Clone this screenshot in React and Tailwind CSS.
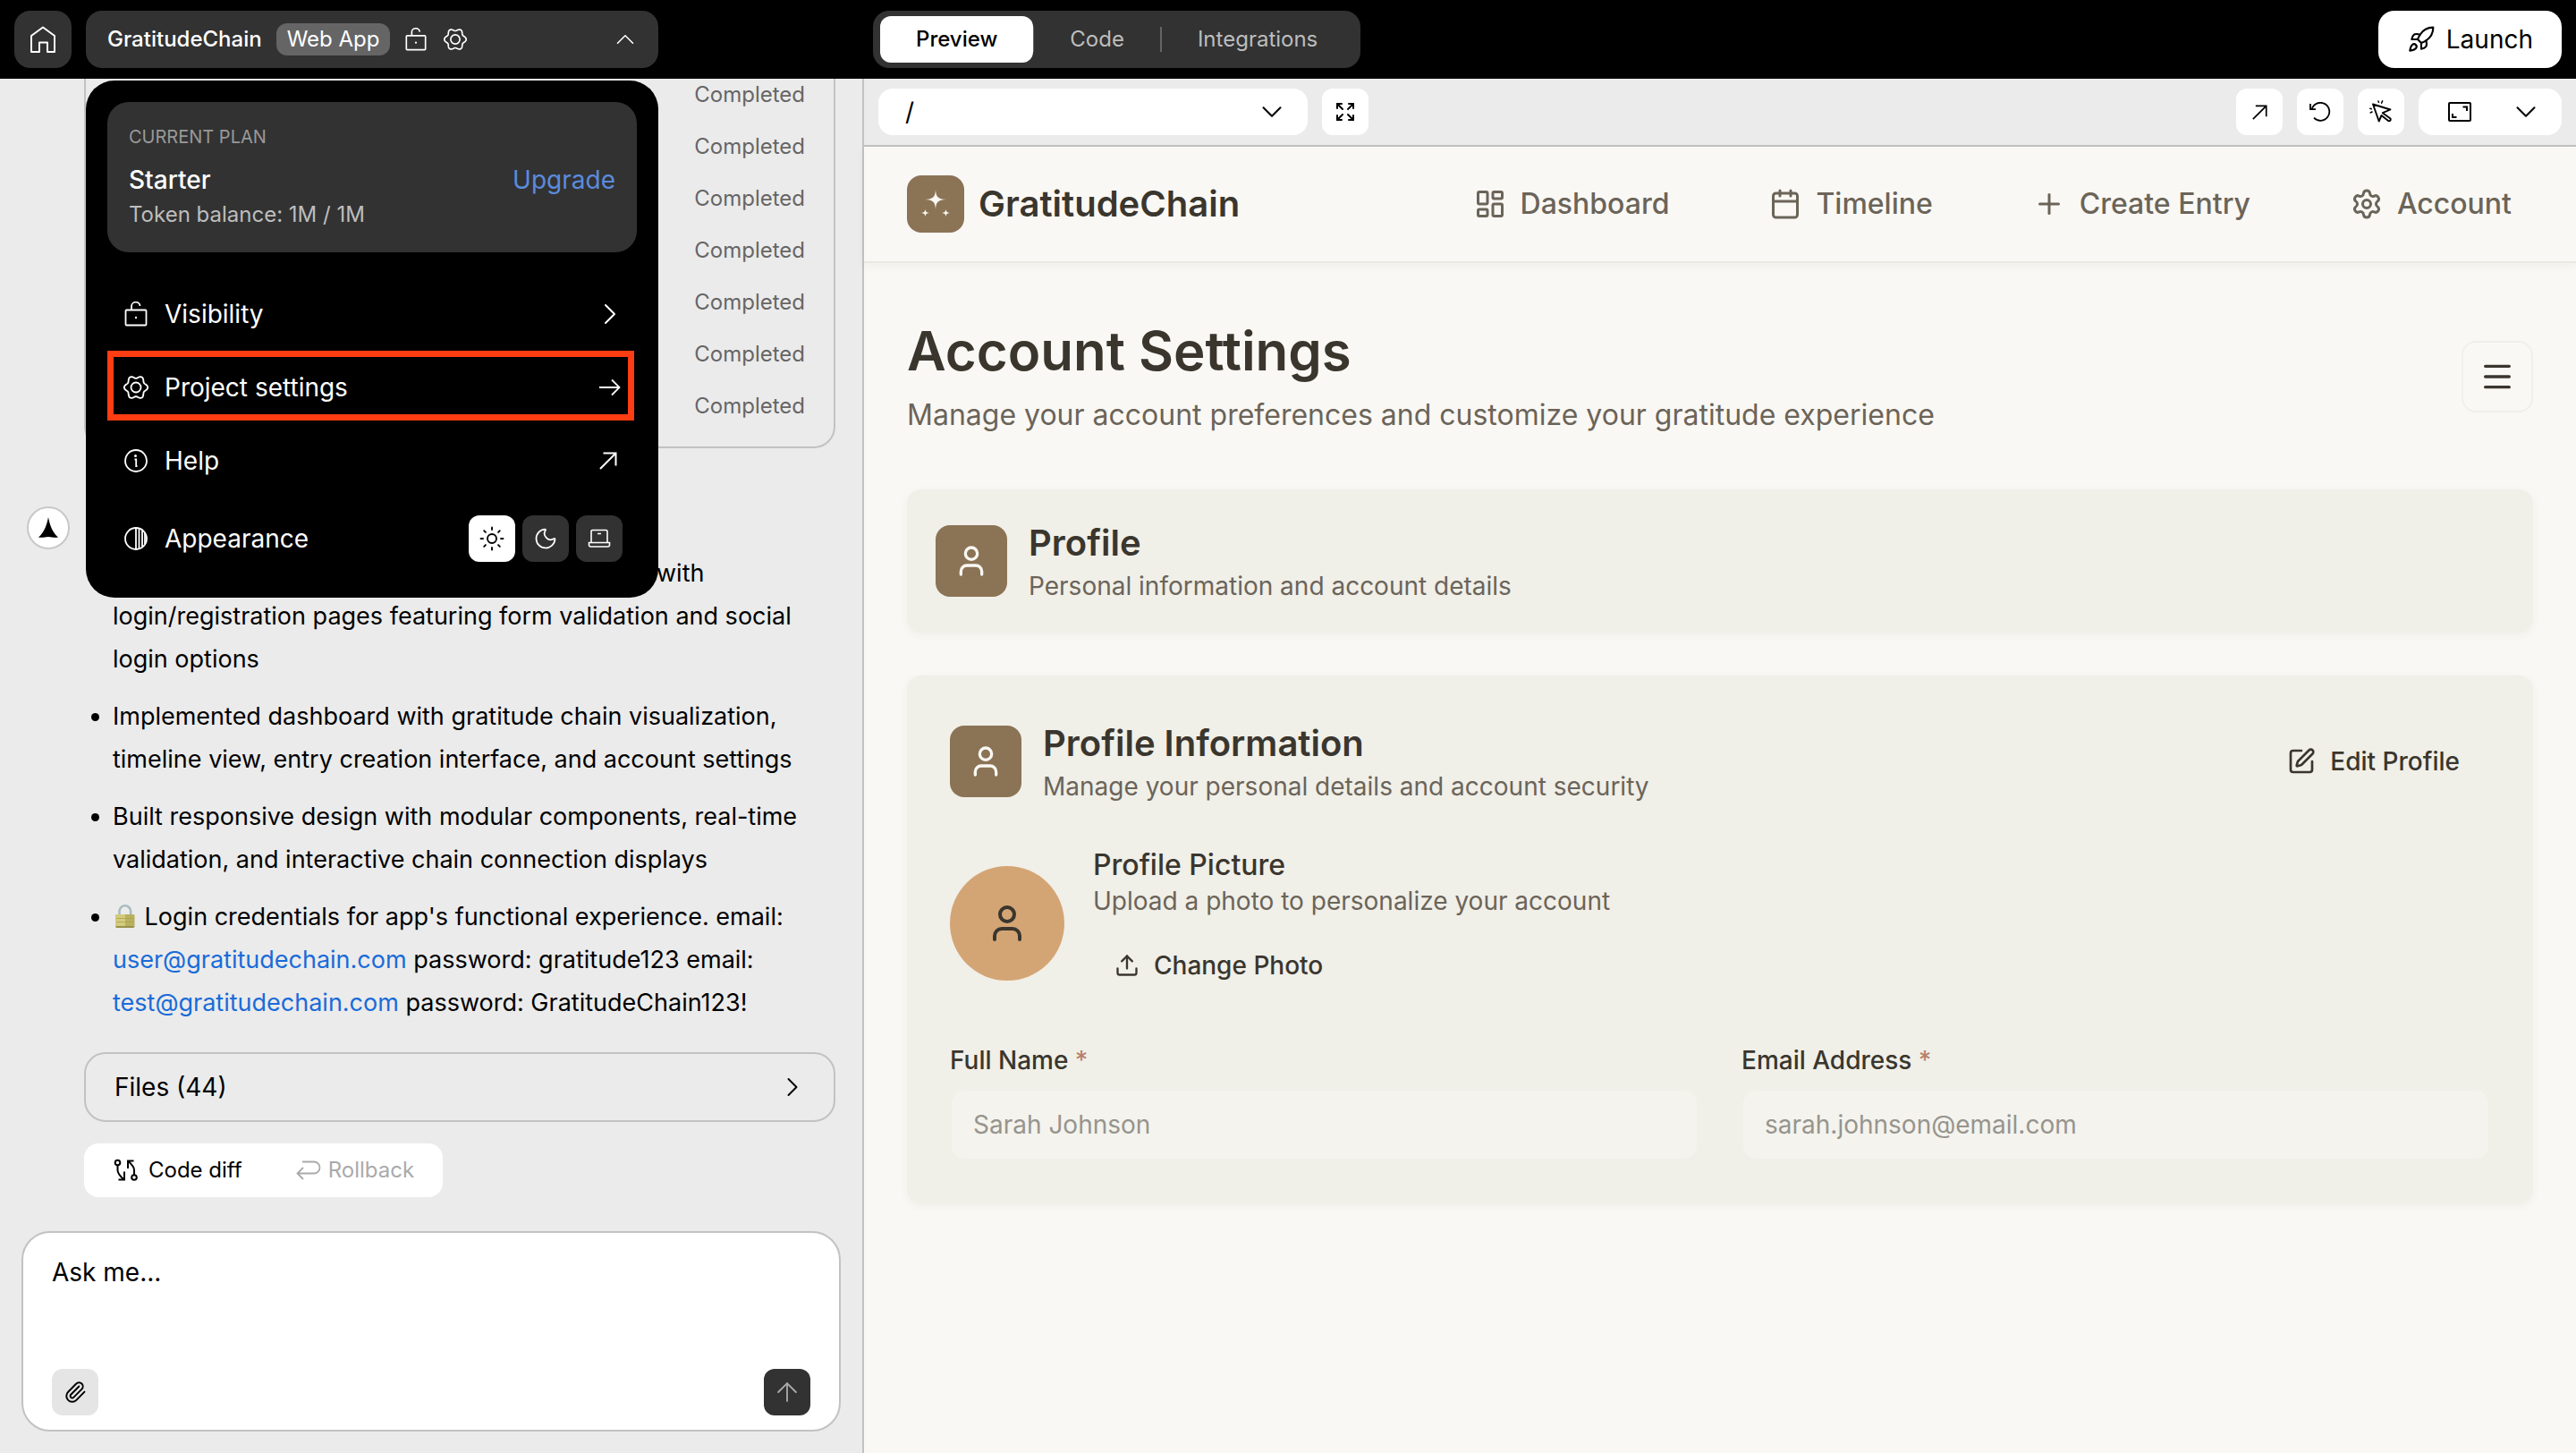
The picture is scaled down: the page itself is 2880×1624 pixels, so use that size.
import { useState } from "react";
import {
  ArrowUp,
  Calendar,
  ChevronDown,
  ChevronRight,
  ChevronUp,
  Expand,
  LayoutDashboard,
  Menu,
  Moon,
  Paperclip,
  Plus,
  Rocket,
  Settings,
  SquarePen,
  Sun,
  Upload,
  User,
} from "lucide-react";

/* ========================
   Icons
======================== */

function HomeIcon() {
  return (
    <svg width="30" height="30" viewBox="0 0 30 30" fill="none" stroke="currentColor" strokeWidth="2">
      <path d="M2 11 15 1.5 28 11v18h-8V18.5h-9V29H2z" strokeLinejoin="round" />
    </svg>
  );
}

function UnlockIcon({ size = 28 }) {
  return (
    <svg width={size} height={size} viewBox="0 0 28 28" fill="none" stroke="currentColor" strokeWidth="1.8">
      <rect x="2.5" y="9.5" width="23" height="17" rx="1" />
      <path d="M9 9.5V6a4.8 4.8 0 0 1 9.6-1" />
      <circle cx="14" cy="18" r="1.2" fill="currentColor" stroke="none" />
    </svg>
  );
}

// rounded six-lobe outline
const gearPoints = Array.from({ length: 120 }, (_, i) => {
  const a = (i * Math.PI) / 60;
  const r = 11.7 + 1.5 * Math.cos(6 * a);
  return `${(14 + r * Math.cos(a)).toFixed(2)},${(14 + r * Math.sin(a)).toFixed(2)}`;
}).join(" ");

function GearIcon({ size = 28 }) {
  return (
    <svg width={size} height={size} viewBox="0 0 28 28" fill="none" stroke="currentColor" strokeWidth="1.8">
      <polygon points={gearPoints} />
      <circle cx="14" cy="14" r="5.5" />
    </svg>
  );
}

function InfoIcon() {
  return (
    <svg width="28" height="28" viewBox="0 0 28 28" fill="none" stroke="currentColor" strokeWidth="1.8">
      <circle cx="14" cy="14" r="12" />
      <path d="M12.5 12.5h1.7V20h1.3" />
      <circle cx="13.5" cy="8.5" r="1.5" fill="currentColor" stroke="none" />
    </svg>
  );
}

function ContrastIcon() {
  return (
    <svg width="28" height="28" viewBox="0 0 28 28" fill="none" stroke="currentColor" strokeWidth="1.8">
      <circle cx="14" cy="14" r="12" />
      <path d="M14 2v24M17.5 3v22M21 4.5v19M24 8v12" />
    </svg>
  );
}

function LaptopIcon() {
  return (
    <svg width="26" height="22" viewBox="0 0 26 22" fill="none" stroke="currentColor" strokeWidth="1.6">
      <path d="M4 15V3a1.5 1.5 0 0 1 1.5-1.5h15A1.5 1.5 0 0 1 22 3v12" />
      <path d="M1.5 15.5h23V18a2 2 0 0 1-2 2h-19a2 2 0 0 1-2-2zM11 5.5h4" />
    </svg>
  );
}

function ArrowRightThin() {
  return (
    <svg width="24" height="20" viewBox="0 0 24 20" fill="none" stroke="currentColor" strokeWidth="1.8">
      <path d="M0 10h22.5M14 1.5l8.5 8.5-8.5 8.5" />
    </svg>
  );
}

function ArrowOutIcon({ size = 20 }) {
  return (
    <svg width={size} height={size} viewBox="0 0 20 20" fill="none" stroke="currentColor" strokeWidth="2">
      <path d="M1 19 18.5 1.5M4.5 1.5h14v14" />
    </svg>
  );
}

function ReloadIcon() {
  return (
    <svg width="24" height="22" viewBox="0 0 24 22" fill="none" stroke="currentColor" strokeWidth="1.8">
      <path d="M5 17.7A10 10 0 1 0 2.7 8" />
      <path d="M1 2v6.2h6" />
    </svg>
  );
}

function PointerClickIcon() {
  return (
    <svg
      width="26"
      height="26"
      viewBox="0 0 26 26"
      fill="none"
      stroke="currentColor"
      strokeWidth="1.9"
      strokeLinecap="round"
      strokeLinejoin="round"
    >
      <path d="M4 4.5 23.5 10.5 14.8 14.2 23.2 20.2a1.6 1.6 0 0 1-2.4 2.6L13.5 17 10.7 23.5z" />
      <path d="M10 .9l.4 1.4M14.6.9l-1 2.3M.9 9.3l1.4.4M1.2 14l1.9-1" strokeWidth="1.5" />
    </svg>
  );
}

function ScreenIcon() {
  return (
    <svg width="26" height="22" viewBox="0 0 26 22" fill="none" stroke="currentColor" strokeWidth="2">
      <rect x="1" y="1" width="24" height="20" rx="1" />
      <path d="M16.5 5.5H21V10M5 13v4h4.5" />
    </svg>
  );
}

function DiffIcon() {
  return (
    <svg width="28" height="26" viewBox="0 0 28 26" fill="none" stroke="currentColor" strokeWidth="2">
      <circle cx="5.500" cy="4.5" r="2.8" />
      <circle cx="24" cy="21" r="2.8" />
      <path d="M5.5 7.5V13c0 3 2 6 7.2 10.5M13 14.5v9H6.5M24 18v-5.5c0-3-2-5.5-7-10M17 11V2.5h6.5" />
    </svg>
  );
}

function RollbackIcon() {
  return (
    <svg width="28" height="22" viewBox="0 0 28 22" fill="none" stroke="currentColor" strokeWidth="1.8">
      <path d="M7 1.5h13a6.5 6.5 0 0 1 0 13H1.5M8 8l-6.5 6.5L8 21" />
    </svg>
  );
}

function AgentMark() {
  return (
    <svg width="22" height="24" viewBox="0 0 22 24" fill="currentColor">
      <path d="M11 0C12.5 8 15 16.5 22 22.5 18 23.5 15 22 11 22S4 23.5 0 22.5C7 16.5 9.5 8 11 0z" />
    </svg>
  );
}

function PadlockEmoji() {
  return (
    <svg width="28" height="28" viewBox="0 0 28 28" className="inline-block align-[-4px]" fill="none">
      <path d="M7.5 14V8.5a6.3 6.3 0 0 1 12.6 0V14" stroke="#a9bcc0" strokeWidth="2.6" />
      <rect x="3" y="12" width="21.5" height="15" rx="1.5" fill="#b9b060" />
      <rect x="3" y="12" width="11" height="13.5" rx="1.5" fill="#d3cb7c" />
      <path d="M4 16.5h19.5M4 20.5h19.5" stroke="#a89f4e" strokeWidth=".7" />
      <path d="M4 26h19.5" stroke="#8d8640" strokeWidth="1.5" />
    </svg>
  );
}

function SparklesMark() {
  return (
    <svg width="32" height="32" viewBox="0 0 32 32" fill="#faf8f3">
      <path d="M16 0c.6 8 2 10.4 12 11-10 .6-11.4 3-12 11-.6-8-2-10.4-12-11 10-.6 11.4-3 12-11z" />
      <path d="M4.5 21.5c.4 3.4 1.2 4.1 4.5 4.5-3.3.4-4.1 1.1-4.5 4.5-.4-3.4-1.2-4.1-4.5-4.5 3.3-.4 4.1-1.1 4.5-4.5z" />
      <path d="M27.5 21.5c.4 3.4 1.2 4.1 4.5 4.5-3.3.4-4.1 1.1-4.5 4.5-.4-3.4-1.2-4.1-4.5-4.5 3.3-.4 4.1-1.1 4.5-4.5z" />
    </svg>
  );
}

/* ========================
   Top bar
======================== */

const themes = [
  { id: "light", label: "Light", icon: <Sun size={30} strokeWidth={1.5} /> },
  { id: "dark", label: "Dark", icon: <Moon size={28} strokeWidth={1.5} /> },
  { id: "system", label: "System", icon: <LaptopIcon /> },
];

function ProjectMenu() {
  const [theme, setTheme] = useState("light");

  return (
    <div className="absolute inset-x-0 top-[78px] z-20 rounded-[32px] bg-black px-6 pt-6 pb-5 text-[28px] text-white">
      <div className="h-[168px] rounded-3xl bg-[#323232] px-6 pt-[23px]">
        <p className="text-xl leading-8 text-[#999]">CURRENT PLAN</p>
        <div className="mt-3 flex items-center justify-between leading-10">
          <span className="font-medium">Starter</span>
          <a href="#upgrade" className="text-[#5b8bdd]">
            Upgrade
          </a>
        </div>
        <p className="text-2xl leading-[38px] text-[#bdbdbd]">Token balance: 1M / 1M</p>
      </div>

      <div className="mt-7 flex flex-col">
        <button className="flex h-[82px] items-center gap-[18px] px-[18px]">
          <UnlockIcon />
          Visibility
          <ChevronRight size={40} strokeWidth={1.2} className="-mr-2 ml-auto" />
        </button>
        <button className="relative flex h-[82px] items-center gap-[18px] px-[18px]">
          <span className="absolute top-0 right-[3px] bottom-1 left-0 border-[7px] border-[#ff3d12]" />
          <GearIcon />
          Project settings
          <span className="ml-auto">
            <ArrowRightThin />
          </span>
        </button>
        <button className="flex h-[82px] items-center gap-[18px] px-[18px]">
          <InfoIcon />
          Help
          <span className="ml-auto pr-1">
            <ArrowOutIcon />
          </span>
        </button>
        <div className="flex h-[92px] items-center gap-[18px] pr-4 pl-[18px]">
          <ContrastIcon />
          Appearance
          <div className="ml-auto flex gap-2">
            {themes.map((t) => (
              <button
                key={t.id}
                aria-label={t.label}
                onClick={() => setTheme(t.id)}
                className={
                  theme === t.id
                    ? "flex size-[52px] items-center justify-center rounded-xl bg-white text-black"
                    : "flex size-[52px] items-center justify-center rounded-xl bg-[#323232] text-white"
                }
              >
                {t.icon}
              </button>
            ))}
          </div>
        </div>
      </div>
    </div>
  );
}

function TopBar() {
  const [tab, setTab] = useState("Preview");
  const idle = "h-[52px] rounded-xl px-10 text-[#bdbdbd]";
  const active = "h-[52px] rounded-xl bg-white px-10 font-medium text-black";

  return (
    <header className="grid h-[88px] grid-cols-[minmax(0,966px)_1fr] items-center bg-black">
      <div className="flex gap-4 pl-4">
        <button aria-label="Home" className="flex size-16 items-center justify-center rounded-[18px] bg-[#323232] text-white">
          <HomeIcon />
        </button>
        <div className="relative w-[640px]">
          <button className="flex h-16 w-full items-center gap-4 rounded-[18px] bg-[#323232] pr-5 pl-6 text-2xl text-white">
            <span className="font-medium">GratitudeChain</span>
            <span className="flex h-9 items-center rounded-xl bg-[#656565] px-3">Web App</span>
            <span className="flex items-center gap-[18px]">
              <UnlockIcon size={26} />
              <GearIcon size={26} />
            </span>
            <ChevronUp size={34} strokeWidth={1.1} className="ml-auto" />
          </button>
          <ProjectMenu />
        </div>
      </div>

      <div className="flex items-center justify-between pr-4 pl-[10px]">
        <nav className="flex h-16 items-center rounded-[18px] bg-[#323232] px-2 text-2xl">
          <button className={tab === "Preview" ? active : idle} onClick={() => setTab("Preview")}>
            Preview
          </button>
          <span className="h-7 w-px bg-[#656565]" />
          <button className={tab === "Code" ? active : idle} onClick={() => setTab("Code")}>
            Code
          </button>
          <span className="h-7 w-0.5 bg-[#656565]" />
          <button className={tab === "Integrations" ? active : idle} onClick={() => setTab("Integrations")}>
            Integrations
          </button>
        </nav>
        <button className="flex h-16 items-center gap-3 rounded-[18px] bg-white px-8 text-[28px] text-black">
          <Rocket size={32} strokeWidth={1.6} />
          Launch
        </button>
      </div>
    </header>
  );
}

/* ========================
   Chat panel
======================== */

const steps = [1, 2, 3, 4, 5, 6, 7];

function ChatPanel() {
  return (
    <aside className="flex flex-col border-r-2 border-[#c2c2c2] bg-[#ebebeb] text-[28px] text-black">
      <div className="pr-[30px] pl-[94px]">
        <ul className="flex flex-col items-end gap-6 rounded-b-3xl border-x-2 border-b-2 border-[#c2c2c2] pt-px pr-8 pb-7 text-2xl leading-[34px] text-[#666]">
          {steps.map((s) => (
            <li key={s}>Completed</li>
          ))}
        </ul>
      </div>

      <div className="mt-[65px] flex gap-4 pr-[30px] pl-[30px]">
        <div className="flex size-12 shrink-0 items-center justify-center rounded-full border-2 border-[#c8c8c8] bg-white">
          <AgentMark />
        </div>
        <div className="min-w-0 flex-1 pt-[51px]">
          <ul className="ml-8 list-disc space-y-4 text-[27px] leading-[48px]">
            <li className="indent-[608px]">
              with
              <br />
              login/registration pages featuring form validation and social login options
            </li>
            <li>
              Implemented dashboard with gratitude chain visualization, timeline view, entry creation interface, and
              account settings
            </li>
            <li>
              Built responsive design with modular components, real-time validation, and interactive chain connection
              displays
            </li>
            <li>
              <PadlockEmoji /> Login credentials for app's functional experience. email:{" "}
              <a href="mailto:user@gratitudechain.com" className="text-[#1a6bd8]">
                user@gratitudechain.com
              </a>{" "}
              password: gratitude123 email:{" "}
              <a href="mailto:test@gratitudechain.com" className="text-[#1a6bd8]">
                test@gratitudechain.com
              </a>{" "}
              password: GratitudeChain123!
            </li>
          </ul>

          <button className="mt-[31px] flex h-[78px] w-full items-center justify-between rounded-3xl border-2 border-[#c2c2c2] pr-7 pl-8">
            Files (44)
            <ChevronRight size={36} strokeWidth={1.3} />
          </button>

          <div className="mt-6 flex h-[60px] w-fit items-center rounded-2xl bg-white px-8 text-2xl">
            <button className="flex items-center gap-3">
              <DiffIcon />
              Code diff
            </button>
            <button className="ml-[60px] flex items-center gap-2 text-[#aaa]" disabled>
              <RollbackIcon />
              Rollback
            </button>
          </div>
        </div>
      </div>

      <form className="mx-6 mt-auto mb-6 flex h-56 flex-col rounded-[32px] border-2 border-[#c2c2c2] bg-white px-8 pt-6 pb-4">
        <textarea
          aria-label="Message"
          placeholder="Ask me..."
          className="w-full flex-1 resize-none leading-10 outline-none placeholder:text-black"
        />
        <div className="flex justify-between">
          <button type="button" aria-label="Attach" className="flex size-[52px] items-center justify-center rounded-xl bg-[#e5e5e5]">
            <Paperclip size={26} strokeWidth={1.8} />
          </button>
          <button type="button" aria-label="Send" className="flex size-[52px] items-center justify-center rounded-xl bg-[#323232] text-[#aaa]">
            <ArrowUp size={34} strokeWidth={1.3} />
          </button>
        </div>
      </form>
    </aside>
  );
}

/* ========================
   Preview panel
======================== */

function Toolbar() {
  const square = "flex size-[52px] items-center justify-center rounded-xl bg-white";

  return (
    <div className="flex h-[76px] items-center gap-4 border-b-2 border-[#c2c2c2] bg-[#ebebeb] px-4 text-black">
      <button className="flex h-[52px] w-[480px] items-center justify-between rounded-2xl bg-white pr-[21px] pl-[30px] text-[28px]">
        /
        <ChevronDown size={38} strokeWidth={1.3} />
      </button>
      <button aria-label="Full screen" className={square}>
        <Expand size={24} />
      </button>
      <div className="ml-auto flex gap-4">
        <button aria-label="Open in new tab" className={square}>
          <ArrowOutIcon size={17} />
        </button>
        <button aria-label="Reload" className={square}>
          <ReloadIcon />
        </button>
        <button aria-label="Select element" className={square}>
          <PointerClickIcon />
        </button>
        <button aria-label="Screen size" className="flex h-[52px] w-40 items-center justify-between rounded-2xl bg-white pr-[21px] pl-[33px]">
          <ScreenIcon />
          <ChevronDown size={38} strokeWidth={1.3} />
        </button>
      </div>
    </div>
  );
}

const navLinks = [
  { label: "Dashboard", icon: LayoutDashboard },
  { label: "Timeline", icon: Calendar },
  { label: "Create Entry", icon: Plus },
  { label: "Account", icon: Settings },
];

function IconTile() {
  return (
    <div className="flex size-20 shrink-0 items-center justify-center rounded-2xl bg-[#8b7355] text-[#faf8f3]">
      <User size={40} />
    </div>
  );
}

function SectionHeading({ title, text }) {
  return (
    <div className="flex items-center gap-6">
      <IconTile />
      <div>
        <h2 className="text-[40px] leading-[56px] font-semibold text-[#3a362e]">{title}</h2>
        <p className="text-[28px] leading-10">{text}</p>
      </div>
    </div>
  );
}

function Field({ id, label, type, placeholder }) {
  return (
    <div className="flex flex-col gap-3">
      <label htmlFor={id} className="text-[28px] leading-10 font-medium text-[#3a362e]">
        {label} <span className="text-[#b8806a]">*</span>
      </label>
      <input
        id={id}
        type={type}
        placeholder={placeholder}
        disabled
        className="h-20 rounded-2xl border-2 border-[#f0efe8] bg-[#f4f3ee] px-6 text-[28px] placeholder:text-[#97948d]"
      />
    </div>
  );
}

function Preview() {
  const card = "mt-12 rounded-2xl bg-[#f0efe8] shadow-[0_3px_10px_rgba(58,54,46,0.05)]";

  return (
    <main className="flex min-w-0 flex-col bg-[#faf8f4] text-[#6b6459]">
      <Toolbar />

      <header className="flex h-[130px] shrink-0 items-center justify-between border-b-2 border-[#e9e8e2] px-12 shadow-[0_3px_10px_rgba(58,54,46,0.05)]">
        <a href="#home" className="flex items-center gap-4">
          <span className="flex size-16 items-center justify-center rounded-2xl bg-[#8b7355]">
            <SparklesMark />
          </span>
          <span className="text-[40px] font-semibold text-[#3a362e]">GratitudeChain</span>
        </a>
        <nav className="flex gap-16 pr-6 text-[32px] font-medium">
          {navLinks.map((l) => (
            <a key={l.label} href="#nav" className="flex items-center gap-4 pl-12">
              <l.icon size={36} />
              {l.label}
            </a>
          ))}
        </nav>
      </header>

      <div className="flex flex-col px-12 pt-12">
        <div className="flex items-center justify-between">
          <div className="pb-[13px]">
            <h1 className="text-[60px] leading-[100px] font-semibold text-[#3a362e]">Account Settings</h1>
            <p className="text-[32px] leading-[44px]">
              Manage your account preferences and customize your gratitude experience
            </p>
          </div>
          <button aria-label="Menu" className="flex size-20 items-center justify-center rounded-2xl border-2 border-[#f0efe9] text-[#3a362e]">
            <Menu size={40} />
          </button>
        </div>

        <section className={`${card} px-8 py-8`}>
          <SectionHeading title="Profile" text="Personal information and account details" />
        </section>

        <section className={`${card} px-12 py-12`}>
          <div className="flex items-center justify-between">
            <SectionHeading title="Profile Information" text="Manage your personal details and account security" />
            <button className="flex items-center gap-4 border-2 border-transparent px-8 text-[28px] font-medium text-[#3a362e]">
              <SquarePen size={32} />
              Edit Profile
            </button>
          </div>

          <div className="mt-12 flex items-center gap-8">
            <div className="flex size-32 items-center justify-center rounded-full bg-[#d4a574] text-[#3a362e]">
              <User size={48} />
            </div>
            <div className="pb-1.5">
              <h3 className="text-[32px] leading-10 font-medium text-[#3a362e]">Profile Picture</h3>
              <p className="text-[28px] leading-10">Upload a photo to personalize your account</p>
              <button className="mt-5 flex h-16 items-center gap-4 px-6 text-[28px] font-medium text-[#3a362e]">
                <Upload size={28} />
                Change Photo
              </button>
            </div>
          </div>

          <div className="mt-12 grid grid-cols-2 gap-12">
            <Field id="name" label="Full Name" type="text" placeholder="Sarah Johnson" />
            <Field id="email" label="Email Address" type="email" placeholder="sarah.johnson@email.com" />
          </div>
        </section>
      </div>
    </main>
  );
}

export default function App() {
  return (
    <div className="flex min-h-screen flex-col font-['Inter',sans-serif]">
      <TopBar />
      <div className="grid flex-1 grid-cols-[minmax(0,966px)_1fr]">
        <ChatPanel />
        <Preview />
      </div>
    </div>
  );
}
